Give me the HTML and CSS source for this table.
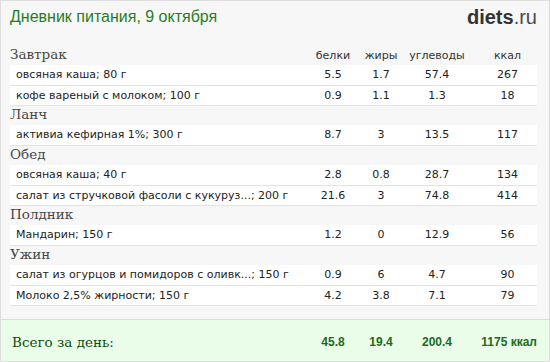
FILE: index.html
```html
<!DOCTYPE html>
<html lang="ru">
<head>
<meta charset="utf-8">
<title>Дневник питания</title>
<link rel="stylesheet" href="styles.css">
</head>
<body>
<div class="page">
  <div class="top">
    <h1 class="title">Дневник питания, 9 октября</h1>
    <div class="logo"><b>diets</b>.ru</div>
  </div>
  <table class="diary">
    <colgroup>
      <col class="c-name"><col class="c-b"><col class="c-f"><col class="c-c"><col class="c-k">
    </colgroup>
    <tr class="sec"><td class="sec-name">Завтрак</td><th>белки</th><th>жиры</th><th>углеводы</th><th class="kk">ккал</th></tr>
    <tr class="item"><td class="name">овсяная каша; 80 г</td><td>5.5</td><td>1.7</td><td>57.4</td><td class="kk">267</td></tr>
    <tr class="item"><td class="name">кофе вареный с молоком; 100 г</td><td>0.9</td><td>1.1</td><td>1.3</td><td class="kk">18</td></tr>
    <tr class="sec"><td class="sec-name" colspan="5">Ланч</td></tr>
    <tr class="item"><td class="name">активиа кефирная 1%; 300 г</td><td>8.7</td><td>3</td><td>13.5</td><td class="kk">117</td></tr>
    <tr class="sec"><td class="sec-name" colspan="5">Обед</td></tr>
    <tr class="item"><td class="name">овсяная каша; 40 г</td><td>2.8</td><td>0.8</td><td>28.7</td><td class="kk">134</td></tr>
    <tr class="item"><td class="name">салат из стручковой фасоли с кукуруз...; 200 г</td><td>21.6</td><td>3</td><td>74.8</td><td class="kk">414</td></tr>
    <tr class="sec"><td class="sec-name" colspan="5">Полдник</td></tr>
    <tr class="item"><td class="name">Мандарин; 150 г</td><td>1.2</td><td>0</td><td>12.9</td><td class="kk">56</td></tr>
    <tr class="sec"><td class="sec-name" colspan="5">Ужин</td></tr>
    <tr class="item"><td class="name">салат из огурцов и помидоров с оливк...; 150 г</td><td>0.9</td><td>6</td><td>4.7</td><td class="kk">90</td></tr>
    <tr class="item"><td class="name">Молоко 2,5% жирности; 150 г</td><td>4.2</td><td>3.8</td><td>7.1</td><td class="kk">79</td></tr>
  </table>
  <div class="total">
    <div class="total-label">Всего за день:</div>
    <div class="total-val">45.8</div>
    <div class="total-val">19.4</div>
    <div class="total-val">200.4</div>
    <div class="total-val total-kcal">1175 ккал</div>
  </div>
</div>
</body>
</html>
```

FILE: styles.css
```css
* { box-sizing: border-box; }

body {
  margin: 0;
  font-family: "DejaVu Sans", Verdana, sans-serif;
}

.page {
  width: 550px;
  height: 362px;
  border: 1px solid #dedede;
  background: #f7f7f7;
  display: flex;
  flex-direction: column;
}

.top {
  display: flex;
  justify-content: space-between;
  align-items: flex-start;
  height: 44px;
  padding: 5px 12px 0 9px;
}

.title {
  margin: 0;
  font-family: "Liberation Sans", Arial, sans-serif;
  font-weight: normal;
  font-size: 16px;
  line-height: 22px;
  color: #1f7f1f;
}

.logo {
  font-family: "Liberation Sans", Arial, sans-serif;
  font-size: 20px;
  line-height: 22px;
  color: #4a4a4a;
}

.logo b {
  color: #333;
}

.diary {
  border-collapse: collapse;
  table-layout: fixed;
  width: 527px;
  margin-left: 9px;
  font-size: 11px;
  color: #222;
}

.c-name { width: 298px; }
.c-b { width: 50px; }
.c-f { width: 46px; }
.c-c { width: 66px; }
.c-k { width: 67px; }

.sec td,
.sec th {
  height: 20px;
  padding: 0 0 3px;
  vertical-align: bottom;
}

.sec-name {
  font-family: "DejaVu Serif", Georgia, serif;
  font-size: 13.5px;
  line-height: 16px;
  color: #474747;
  text-align: left;
}

.sec th {
  font-weight: normal;
  font-size: 11px;
  line-height: 14px;
  color: #333;
  text-align: center;
  padding-bottom: 2px;
}

.item td {
  height: 20px;
  padding: 0;
  line-height: 19px;
  background: #fff;
  border-bottom: 1px solid #e3e3e3;
  text-align: center;
  white-space: nowrap;
}

.item td.name {
  text-align: left;
  padding-left: 6px;
}

.diary .kk {
  padding-left: 8px;
}

.total {
  margin-top: auto;
  height: 42px;
  border-top: 1px solid #dcdcdc;
  background: #e9fde9;
  display: grid;
  grid-template-columns: 298px 50px 46px 66px 67px;
  align-items: center;
  padding-left: 9px;
  padding-top: 2px;
}

.total-label {
  font-family: "DejaVu Serif", Georgia, serif;
  font-size: 13.5px;
  color: #0d4d0d;
  padding-left: 2px;
}

.total-val {
  font-family: "Liberation Sans", Arial, sans-serif;
  font-weight: bold;
  font-size: 12px;
  color: #1b6b1b;
  text-align: center;
}

.total-kcal {
  text-align: right;
}
```
